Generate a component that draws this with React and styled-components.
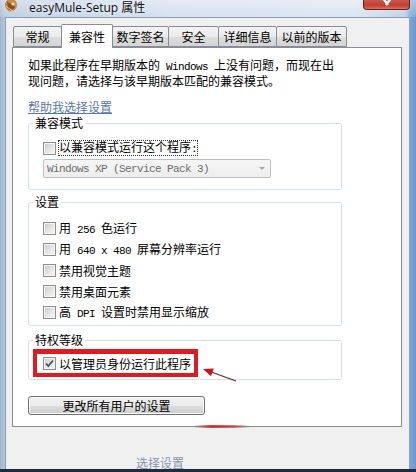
import React from "react";
import styled, { createGlobalStyle } from "styled-components";

const CJK = `"Noto Sans CJK SC", "Noto Sans", sans-serif`;
const MONO = `"Liberation Mono", "DejaVu Sans Mono", monospace`;

const GlobalStyle = createGlobalStyle`
  html, body { margin: 0; padding: 0; background: #fff; }
  body { font-family: ${CJK}; font-size: 12px; color: #000; }
  * { box-sizing: border-box; }
`;

const Window = styled.div`
  width: 416px;
  height: 472px;
  overflow: hidden;
  display: flex;
  flex-direction: column;
  padding: 0 6px 0 5px;
  border-bottom: 3px solid #1f2c3f;
  background: linear-gradient(
    90deg,
    #9fb4ce 0px,
    #b4c7dd 5px,
    #cddbeb 40%,
    #d6e2ef 85%,
    #b6cce6 405px,
    #7ea5d5 410px,
    #6a96cc 416px
  );
`;

const TitleBar = styled.div`
  height: 18px;
  display: flex;
  align-items: flex-start;
  background: linear-gradient(180deg, rgba(255, 255, 255, 0.45), rgba(255, 255, 255, 0.15));
  margin: 0 -6px 0 -5px;
  padding: 0 6px 0 4px;
`;

const Title = styled.span`
  font-family: "Open Sans", ${CJK};
  font-size: 12px;
  line-height: 16px;
  margin-left: 10px;
  color: #111;
  text-shadow: 0 0 6px rgba(255, 255, 255, 0.9);
`;

const CloseButton = styled.div`
  margin-left: auto;
  width: 47px;
  height: 10px;
  border: 1px solid #6b1f17;
  border-top: none;
  border-radius: 0 0 4px 4px;
  background: linear-gradient(180deg, #c95a4c 0%, #c13f2e 60%, #d8765f 100%);
  display: flex;
  justify-content: center;
  align-items: flex-start;
`;

const Client = styled.div`
  flex: 1;
  border: 1px solid #8e9db2;
  border-bottom: none;
  background: #f0f0f0;
  padding-top: 6px;
  display: flex;
  flex-direction: column;
`;

const TabStrip = styled.div`
  height: 23px;
  display: flex;
  align-items: flex-end;
  padding-left: 7px;
`;

const Tab = styled.div`
  position: relative;
  z-index: ${(p) => (p.$active ? 1 : 0)};
  width: ${(p) => p.$w}px;
  height: ${(p) => (p.$active ? 24 : 21)}px;
  margin-bottom: ${(p) => (p.$active ? -1 : 0)}px;
  margin-left: ${(p) => (p.$first ? 0 : -1)}px;
  border: 1px solid #898c95;
  border-bottom: ${(p) => (p.$active ? "none" : "1px solid #898c95")};
  border-radius: 2px 2px 0 0;
  background: ${(p) =>
    p.$active ? "#ffffff" : "linear-gradient(180deg, #f3f3f3 0%, #ebebeb 50%, #dddddd 51%, #d5d5d5 100%)"};
  display: flex;
  justify-content: center;
  align-items: center;
  padding-top: ${(p) => (p.$active ? 0 : 1)}px;
  font-size: 12px;
  line-height: 12px;
  white-space: nowrap;
`;

const Panel = styled.div`
  position: relative;
  margin-left: 6px;
  width: 390px;
  height: 380px;
  border: 1px solid #898c95;
  background: #ffffff;
  padding: 10px 0 0 15px;
  display: flex;
  flex-direction: column;
  align-items: flex-start;
`;

const Intro = styled.p`
  margin: 0;
  font-size: 12px;
  line-height: 13px;
  white-space: nowrap;
`;

const Latin = styled.span`
  font-family: ${MONO};
  font-size: 11px;
  letter-spacing: -0.6px;
  white-space: pre;
`;

const HelpLink = styled.a`
  margin-top: 14px;
  font-size: 12px;
  line-height: 12px;
  color: #5877a6;
  text-decoration: underline;
  text-underline-offset: 1px;
  cursor: pointer;
`;

const Group = styled.fieldset`
  margin: ${(p) => p.$top}px 0 0 0;
  padding: 0 0 ${(p) => p.$bottom}px 0;
  width: 314px;
  border: 1px solid #d5dfe5;
  border-radius: 3px;
  min-inline-size: 0;
`;

const Legend = styled.legend`
  margin-left: 4px;
  padding: 0 2px;
  font-size: 12px;
  line-height: 12px;
`;

const GroupBody = styled.div`
  padding: ${(p) => p.$top}px 0 0 14px;
  display: flex;
  flex-direction: column;
  align-items: flex-start;
`;

const CheckRow = styled.label`
  display: flex;
  align-items: center;
  gap: ${(p) => (p.$focus ? 2 : 3)}px;
  height: ${(p) => p.$h || 21}px;
  font-size: 12px;
  line-height: 12px;
  white-space: nowrap;
`;

const Box = styled.span`
  position: relative;
  width: 13px;
  height: 13px;
  flex: none;
  border: 1px solid #8f8f8f;
  background: linear-gradient(135deg, #c9c9c9 0%, #e6e6e6 55%, #f6f6f6 100%);
  box-shadow: inset 0 0 0 1px #f4f4f4;
  display: flex;
  align-items: center;
  justify-content: center;
`;

const FocusText = styled.span`
  border: 1px dotted #333;
  line-height: 12px;
`;

const Combo = styled.div`
  margin-top: 4px;
  width: 228px;
  height: 19px;
  border: 1px solid #bcc0c4;
  border-radius: 2px;
  background: linear-gradient(180deg, #f6f6f6, #ededed);
  display: flex;
  align-items: center;
  padding: 0 4px 0 3px;
  color: #6d6d6d;
  font-family: ${MONO};
  font-size: 11px;
  letter-spacing: -0.6px;
  white-space: pre;
`;

const ComboArrow = styled.span`
  margin-left: auto;
  width: 0;
  height: 0;
  border-left: 3.5px solid transparent;
  border-right: 3.5px solid transparent;
  border-top: 3.5px solid #a4a4a4;
  margin-right: 1px;
`;

const Highlight = styled.div`
  margin: 3px 0 0 -10px;
  width: 165px;
  height: 28px;
  border: 4px solid #dd1c22;
  border-top-width: 5px;
  padding-left: 6px;
  background: #ffffff;
  display: flex;
  align-items: center;
`;

const ActionButton = styled.button`
  margin-top: 16px;
  width: 177px;
  height: 19px;
  padding: 0;
  border: 1px solid #707070;
  border-radius: 3px;
  background: linear-gradient(180deg, #f2f2f2 0%, #ebebeb 50%, #dddddd 51%, #cfcfcf 100%);
  box-shadow: inset 0 0 0 1px #fbfbfb;
  font-family: ${CJK};
  font-size: 12px;
  line-height: 12px;
  color: #000;
`;

const Arrow = styled.svg`
  position: absolute;
  left: 185px;
  top: 315px;
`;

const Smear = styled.div`
  position: absolute;
  left: 182px;
  bottom: -2px;
  width: 56px;
  height: 3px;
  background: linear-gradient(90deg, rgba(220, 40, 40, 0.1), rgba(200, 30, 30, 0.85) 30%, rgba(190, 40, 40, 0.6) 70%, rgba(200, 60, 60, 0));
`;

const Ghost = styled.div`
  margin: 30px 0 0 130px;
  font-size: 12px;
  line-height: 12px;
  color: rgba(95, 115, 150, 0.75);
`;

const Check = () => (
  <svg width="9" height="9" viewBox="0 0 9 9">
    <path d="M1 4.6 L3.4 7 L8 1.5" fill="none" stroke="#3d4f7c" strokeWidth="1.8" />
  </svg>
);

const CheckBox = ({ checked }) => <Box>{checked && <Check />}</Box>;

const MuleIcon = () => (
  <svg width="15" height="13" viewBox="0 0 15 13">
    <ellipse cx="7" cy="5" rx="6" ry="6.5" fill="#c98a4a" />
    <path d="M3 1 C5 4 9 3 11 7 C10 10 6 11 4 9 Z" fill="#8a4f22" />
    <circle cx="9" cy="4" r="1.6" fill="#f4e2c8" />
    <path d="M2 6 C4 8 6 9 9 11" stroke="#f0d2a8" strokeWidth="1" fill="none" />
  </svg>
);

const tabs = [
  { label: "常规", w: 49 },
  { label: "兼容性", w: 52, active: true },
  { label: "数字签名", w: 57 },
  { label: "安全", w: 51 },
  { label: "详细信息", w: 59 },
  { label: "以前的版本", w: 71 },
];

const settings = [
  <>用<Latin> 256 </Latin>色运行</>,
  <>用<Latin> 640 x 480 </Latin>屏幕分辨率运行</>,
  <>禁用视觉主题</>,
  <>禁用桌面元素</>,
  <>高<Latin> DPI </Latin>设置时禁用显示缩放</>,
];

export default function App() {
  return (
    <>
      <GlobalStyle />
      <Window>
        <TitleBar>
          <MuleIcon />
          <Title>easyMule-Setup 属性</Title>
          <CloseButton>
            <svg width="12" height="6" viewBox="0 0 12 6">
              <path d="M1 -3 L7 5 M11 -3 L5 5" stroke="#fff" strokeWidth="2.2" />
            </svg>
          </CloseButton>
        </TitleBar>
        <Client>
          <TabStrip>
            {tabs.map((t, i) => (
              <Tab key={t.label} $w={t.w} $active={t.active} $first={i === 0}>
                {t.label}
              </Tab>
            ))}
          </TabStrip>
          <Panel>
            <Intro>
              如果此程序在早期版本的<Latin> Windows </Latin>上没有问题，而现在出
              <br />
              现问题，请选择与该早期版本匹配的兼容模式。
            </Intro>
            <HelpLink>帮助我选择设置</HelpLink>

            <Group $top={4} $bottom={11}>
              <Legend>兼容模式</Legend>
              <GroupBody $top={12}>
                <CheckRow $h={14} $focus>
                  <CheckBox />
                  <FocusText>
                    以兼容模式运行这个程序<Latin>:</Latin>
                  </FocusText>
                </CheckRow>
                <Combo>
                  Windows XP (Service Pack 3)
                  <ComboArrow />
                </Combo>
              </GroupBody>
            </Group>

            <Group $top={6} $bottom={2}>
              <Legend>设置</Legend>
              <GroupBody $top={10}>
                {settings.map((s, i) => (
                  <CheckRow key={i}>
                    <CheckBox />
                    <span>{s}</span>
                  </CheckRow>
                ))}
              </GroupBody>
            </Group>

            <Group $top={8} $bottom={2}>
              <Legend>特权等级</Legend>
              <GroupBody $top={0}>
                <Highlight>
                  <CheckRow $h={18}>
                    <CheckBox checked />
                    <span>以管理员身份运行此程序</span>
                  </CheckRow>
                </Highlight>
              </GroupBody>
            </Group>

            <ActionButton>更改所有用户的设置</ActionButton>

            <Arrow width="45" height="24" viewBox="0 0 45 24">
              <path d="M14 9.3 L38 18" stroke="#7a1a1a" strokeWidth="1.1" />
              <path d="M5 6 L15.8 5.6 L13 13.2 Z" fill="#c4161c" />
            </Arrow>
            <Smear />
          </Panel>
          <Ghost>选择设置</Ghost>
        </Client>
      </Window>
    </>
  );
}
